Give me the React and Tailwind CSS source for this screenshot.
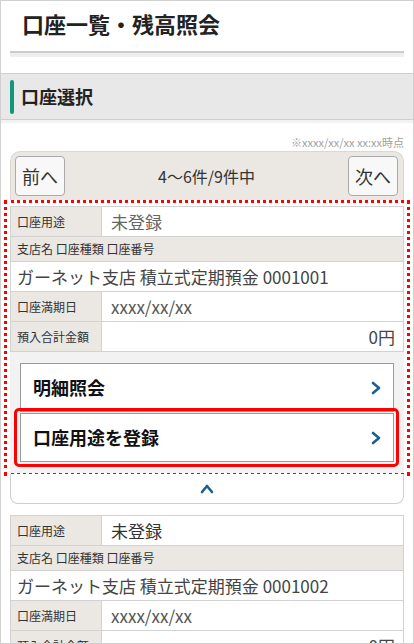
import React from 'react';

const font = { fontFamily: '"Noto Sans CJK JP", "Noto Sans", sans-serif' };

const Chevron = ({ up = false }) => (
  <svg width="10" height="14" viewBox="0 0 10 14" className={up ? '-rotate-90' : ''}>
    <polyline points="2,2 8,7 2,12" fill="none" stroke="#1d5f8e" strokeWidth="2.6" strokeLinecap="round" strokeLinejoin="round" />
  </svg>
);

const AccountTable = ({ number, usageDark }) => (
  <div className="border border-[#d2d2d2] bg-white text-[#444]">
    <div className="grid grid-cols-[91px_1fr] h-[30px] border-b border-[#d2d2d2]">
      <div className="bg-[#ebe7e3] border-r border-[#d2d2d2] flex items-center pl-[6px] text-[12px] text-[#333]">口座用途</div>
      <div className={`flex items-center pl-[9px] text-[17px] ${usageDark ? 'text-[#333]' : 'text-[#666]'}`}>未登録</div>
    </div>
    <div className="h-[25px] bg-[#ebe7e3] border-b border-[#d2d2d2] flex items-center pl-[6px] text-[12px] text-[#333]">
      支店名 口座種類 口座番号
    </div>
    <div className="h-[30px] border-b border-[#d2d2d2] flex items-center pl-[6px] text-[17px] text-[#444]">
      ガーネット支店 積立式定期預金 {number}
    </div>
    <div className="grid grid-cols-[91px_1fr] h-[30px] border-b border-[#d2d2d2]">
      <div className="bg-[#ebe7e3] border-r border-[#d2d2d2] flex items-center pl-[6px] text-[12px] text-[#333]">口座満期日</div>
      <div className="flex items-center pl-[9px] text-[17px] text-[#555]">xxxx/xx/xx</div>
    </div>
    <div className="grid grid-cols-[91px_1fr] h-[29px]">
      <div className="bg-[#ebe7e3] border-r border-[#d2d2d2] flex items-center pl-[6px] text-[12px] text-[#333]">預入合計金額</div>
      <div className="flex items-center justify-end pr-[8px] text-[17px] text-[#444]">0円</div>
    </div>
  </div>
);

const MenuButton = ({ label }) => (
  <div className="h-[49px] border border-[#9a9a9a] bg-white flex items-center justify-between pl-[12px] pr-[12px]">
    <span className="text-[18px] font-bold text-[#111]">{label}</span>
    <Chevron />
  </div>
);

export default function App() {
  return (
    <div style={font} className="h-[644px] overflow-hidden border border-[#d0d0d0] bg-white">
      <div className="h-[44px] pl-[21px] flex items-center">
        <h1 className="text-[22px] font-bold text-[#222]">口座一覧・残高照会</h1>
      </div>
      <div className="mx-[9px] mt-[6px] h-[6px] border-t-2 border-[#cccccc] bg-[#eeeeee]"></div>

      <div className="mt-[16px] h-[47px] border-y border-[#cfcfcf] bg-[#e8e8e8] flex items-center">
        <div className="ml-[9px] w-[4px] h-[34px] rounded-[2px] bg-[#13977a]"></div>
        <h2 className="ml-[7px] text-[18px] font-bold text-[#222]">口座選択</h2>
      </div>
      <div className="h-[3px] bg-[#f2f2f2]"></div>

      <div className="px-[9px]">
        <p className="mt-[12px] h-[15px] text-right text-[11px] leading-[15px] text-[#a0a0a0]">※xxxx/xx/xx xx:xx時点</p>

        <div className="mt-[1px] h-[49px] rounded-t-[10px] border border-b-0 border-[#dcd7d2] bg-[#ebe7e3] flex items-center justify-between pl-[4px] pr-[5px]">
          <button className="w-[50px] h-[40px] rounded-[4px] border border-[#aaa] bg-[#f8f8f8] text-[18px] text-[#333]">前へ</button>
          <span className="text-[16px] text-[#333]">4〜6件/9件中</span>
          <button className="w-[50px] h-[40px] rounded-[4px] border border-[#aaa] bg-[#f8f8f8] text-[18px] text-[#333]">次へ</button>
        </div>

        <div className="-mx-[6px] border-[3px] border-dotted border-[#ff0000] px-[3px] pt-[3px]">
          <AccountTable number="0001001" />
          <div className="bg-[#f2f2f2] px-[10px] pt-[11px] pb-[11px] flex flex-col">
            <MenuButton label="明細照会" />
            <div className="relative mt-[1px]">
              <MenuButton label="口座用途を登録" />
              <span className="absolute -left-[6px] -right-[5px] -top-[5px] -bottom-[5px] border-[3px] border-[#ff0000] rounded-[5px] pointer-events-none"></span>
            </div>
          </div>
        </div>

        <div className="h-[30px] -mt-[2px] border border-t-0 border-[#cfcfcf] rounded-b-[8px] bg-white flex items-center justify-center">
          <Chevron up />
        </div>

        <div className="mt-[11px]">
          <AccountTable number="0001002" usageDark />
        </div>
      </div>
    </div>
  );
}
